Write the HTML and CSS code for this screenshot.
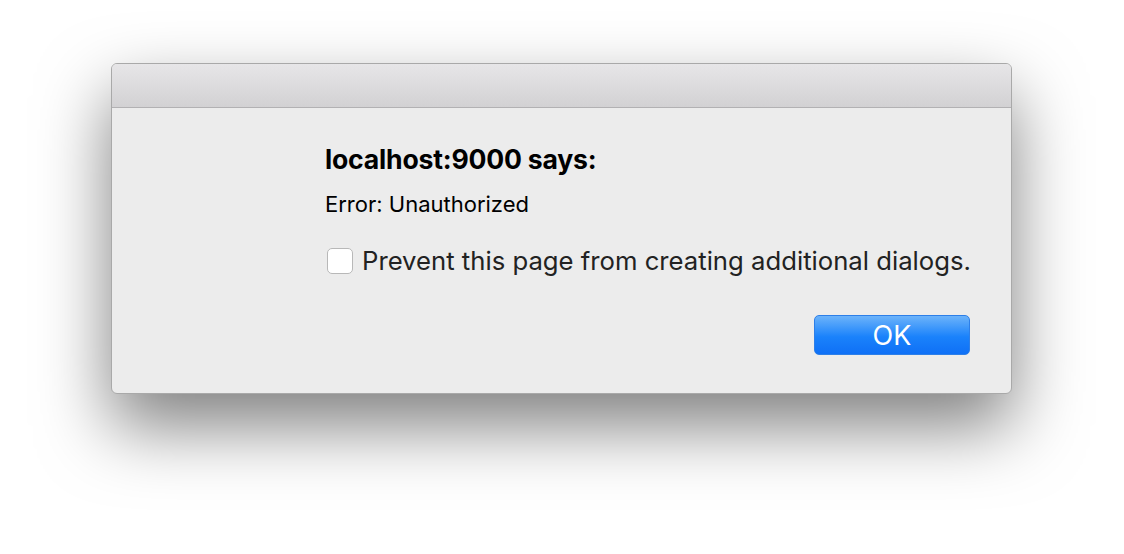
FILE: index.html
```html
<!DOCTYPE html>
<html>
<head>
<meta charset="utf-8">
<link rel="stylesheet" href="styles.css">
</head>
<body>
<div class="stage">
  <div class="window">
    <div class="titlebar"></div>
    <div class="content">
      <div class="title">localhost:9000 says:</div>
      <div class="message">Error: Unauthorized</div>
      <label class="check-row">
        <span class="checkbox"></span>
        <span class="check-label">Prevent this page from creating additional dialogs.</span>
      </label>
      <div class="actions">
        <button class="ok">OK</button>
      </div>
    </div>
  </div>
</div>
</body>
</html>
```
FILE: styles.css
```css
html, body {
  margin: 0;
  padding: 0;
  background: #ffffff;
}
body {
  width: 1124px;
  height: 554px;
  overflow: hidden;
  font-family: Inter, "Liberation Sans", Arial, sans-serif;
}
.stage {
  padding: 63px 0 0 111px;
}
.window {
  width: 901px;
  height: 331px;
  box-sizing: border-box;
  background: #ececec;
  border: 1px solid #a9a9a9;
  border-radius: 6px;
  box-shadow: 0 32px 70px rgba(0, 0, 0, 0.5);
  display: flex;
  flex-direction: column;
  overflow: hidden;
}
.titlebar {
  height: 43px;
  flex: none;
  background: linear-gradient(#e7e6e8, #d2d1d3);
  border-bottom: 1px solid #b2b1b3;
}
.content {
  padding: 35px 41px 0 213px;
  display: flex;
  flex-direction: column;
}
.title {
  font-size: 26.6px;
  font-weight: 700;
  color: #000;
  line-height: 32px;
  letter-spacing: -0.2px;
  white-space: nowrap;
}
.message {
  margin-top: 16px;
  font-size: 22px;
  line-height: 26px;
  color: #000;
  white-space: nowrap;
}
.check-row {
  margin-top: 29px;
  display: flex;
  align-items: center;
  gap: 9px;
  height: 30px;
}
.checkbox {
  width: 26px;
  height: 26px;
  box-sizing: border-box;
  border: 1px solid #b8b8b8;
  border-radius: 5px;
  background: #fff;
  margin-left: 2px;
  flex: none;
}
.check-label {
  font-size: 25.7px;
  line-height: 30px;
  color: #222;
  white-space: nowrap;
}
.actions {
  margin-top: 39px;
  display: flex;
  justify-content: flex-end;
}
.ok {
  width: 156px;
  height: 40px;
  border: 1px solid #2d7fe8;
  border-radius: 5px;
  background: linear-gradient(#6cb3fa, #1a82fb 55%, #0f70f6);
  color: #fff;
  font-family: Inter, "Liberation Sans", Arial, sans-serif;
  font-size: 27px;
  padding: 0;
}
```
